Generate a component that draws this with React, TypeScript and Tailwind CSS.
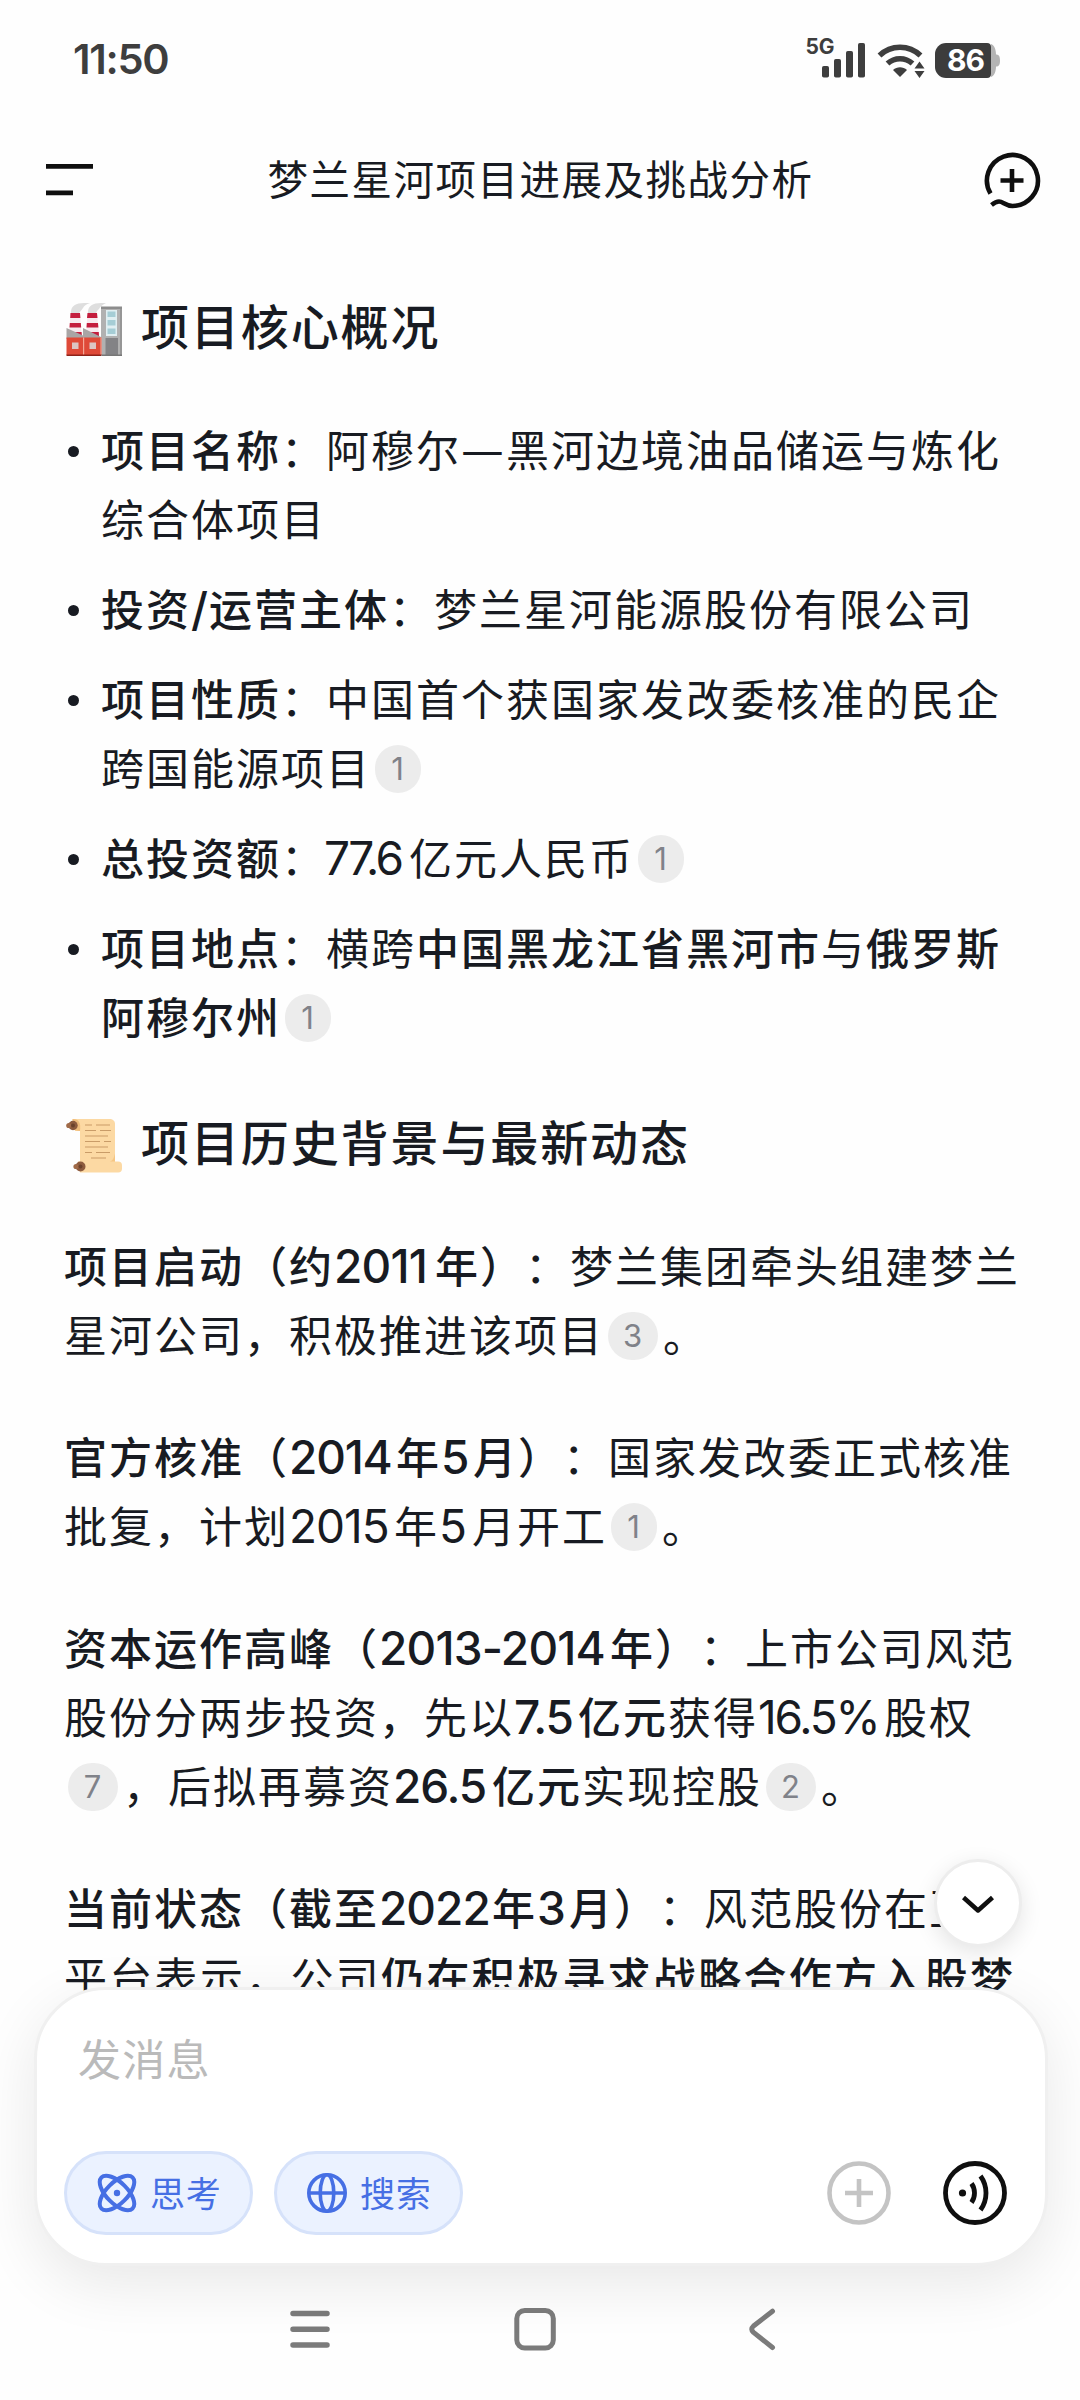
import React from "react";

type Props = { children?: React.ReactNode; className?: string };

function Num({ children, className = "tracking-[-1px]" }: Props) {
  return (
    <span className={`inline-block text-left font-[Inter] text-[46px] leading-none ${className}`}>
      {children}
    </span>
  );
}

function B({ children, className = "" }: Props) {
  return <span className={`font-medium ${className}`}>{children}</span>;
}

function Cite({ n }: { n: number }) {
  return (
    <span
      className={`mr-[5.5px] ml-[3.5px] inline-flex h-12 items-center justify-center rounded-full bg-[#ececec] align-[5px] font-[Inter] text-[31px] leading-none tracking-normal text-[#808289] ${n === 1 ? "w-[46px]" : "w-[50px]"}`}
    >
      {n}
    </span>
  );
}

function Line({ children, className = "" }: Props) {
  return <div className={`h-[69px] leading-[62px] whitespace-nowrap ${className}`}>{children}</div>;
}

function Item({ children }: Props) {
  return (
    <li className="flex">
      <span className="mt-[29px] mr-[22px] ml-1 size-[11px] shrink-0 rounded-full bg-[#181b22]" />
      <div>{children}</div>
    </li>
  );
}

function Heading({ children, icon }: Props & { icon: React.ReactNode }) {
  return (
    <h2 className="flex h-[69px] items-center text-[48px] leading-[62px] font-medium tracking-[1.9px]">
      {icon}
      <span className="ml-[19px] pb-[7px]">{children}</span>
    </h2>
  );
}

function FactoryIcon() {
  return (
    <svg className="mt-1 ml-0.5 h-[54px] w-14" viewBox="0 0 56 54">
      <path d="M5 9C5 3 10 0 18 0h6c-4 1-6 3-7 5-2 3-4 4-4 6H5zM22 9c0-6 5-9 13-9h5c-4 2-6 4-7 6-2 2-3 3-3 5h-8z" fill="#dedede" />
      <path d="M4.500 10h9.500l1.500 22H3zM21.500 10H31l2 22H20z" fill="#f7e9ee" />
      <path d="M4.500 10h9.500l.4 5H4.200zM3.800 20h11l.4 4.500H3.500zM3.200 29h12.400l.4 5H3zM21.500 10H31l.5 5H21zM20.800 20H32l.4 4.500H20.500zM20.200 29h12.600l.2 5H20z" fill="#c41e3e" />
      <path d="M35 5h21v47H35z" fill="#b1b1b1" />
      <path d="M35 3.500h21V6H35z" fill="#8c8c8c" />
      <path d="M54 6h2v46h-2z" fill="#969696" />
      <path d="M40 7h11v26H40z" fill="#e0eff2" />
      <path d="M41.500 8.500h8v5.500h-8zM41.500 17h8v5.500h-8zM41.500 25.500h8V31h-8z" fill="#a5cdd5" />
      <path d="M39.500 35H52v17H39.500z" fill="#838386" />
      <path d="M.5 25L17 32.500V25l18 9v2H.5z" fill="#a9a5a5" />
      <path d="M.5 34.500h35V52H.5z" fill="#df4a38" />
      <path d="M17 34.500h1.200V52H17zM34.500 34.500h1V52h-1z" fill="#f5a797" />
      <path d="M6 39.500h6.500V46H6zM23.500 39.500H30V46h-6.500z" fill="#dcc5c3" />
      <path d="M.5 51.500h35V53H.5z" fill="#8f2219" />
      <path d="M35.500 51.500H56V53H35.500z" fill="#777" />
    </svg>
  );
}

function ScrollIcon() {
  return (
    <svg className="mt-1 ml-0.5 h-[54px] w-14" viewBox="0 0 56 54">
      <path d="M6 0h37c4 0 6 2 6 5v40H14V12H9z" fill="#fcd9a3" />
      <path d="M7 0c6 0 8 4 7 12-6 0-8-3-8-5z" fill="#f0bd7c" />
      <path d="M12 42.500h40a4 4 0 014 4v3a4 4 0 01-4 4H14z" fill="#fcd9a3" />
      <path d="M14 42.500h30c3-1 4-4 5-8v8z" fill="#f5c683" />
      <circle cx="7" cy="6.500" r="4.700" fill="#8d5b3e" />
      <circle cx="2.800" cy="6.500" r="2.600" fill="#a06a48" />
      <circle cx="7" cy="6.500" r="2" fill="#6b412b" />
      <circle cx="14.500" cy="47.500" r="5" fill="#8d5b3e" />
      <circle cx="10" cy="47.500" r="2.600" fill="#a06a48" />
      <circle cx="14.500" cy="47.500" r="2" fill="#6b412b" />
      <g stroke="#c99c68" strokeWidth="1.100" fill="none">
        <path d="M19 6h7M30 6h14M19 11.500h11M34 11.500h11M19 17h23M19 22.500h15M38 22.500h7M19 28h23M19 33.500h7M30 33.500h14M25 39h15" />
      </g>
    </svg>
  );
}

function StatusBar() {
  return (
    <div className="flex h-[120px] items-center pr-[80px] pl-[73px] font-[Inter] text-[#3e3e3e]">
      <span className="text-[41.500px] leading-none font-semibold tracking-[-1.3px]">11:50</span>
      <div className="ml-auto flex items-center">
        <span className="-mr-3 mb-[27px] text-[21px] leading-none font-bold tracking-[-0.4px]">5G</span>
        <svg className="h-9 w-[106px]" viewBox="0 0 106 36" fill="#3e3e3e">
          <rect x="0" y="24" width="7" height="11.500" rx="1.800" />
          <rect x="12" y="17" width="7" height="18.500" rx="1.800" />
          <rect x="24" y="9" width="7" height="26.500" rx="1.800" />
          <rect x="36" y="1" width="7" height="34.500" rx="1.800" />
          <g fill="none" stroke="#3e3e3e" strokeWidth="5.500">
            <path d="M57.500 13.500a29.500 29.500 0 0141 0" />
            <path d="M65.500 21.500a18.500 18.500 0 0125 0" />
          </g>
          <path d="M71 28c4-3.600 10-3.600 14 0l-7 7z" />
          <path d="M97.500 19.500l5 7h-10zM97.500 36l5-7h-10z" />
        </svg>
        <div className="ml-[7px] flex items-center">
          <div className="flex h-[35px] w-[56px] items-center justify-center rounded-l-[11px] rounded-r-[4px] bg-[#3c3c3c] pl-[5px] text-[30px] leading-none font-bold tracking-[-1px] text-white">
            86
          </div>
          <svg className="h-[35px] w-[9px]" viewBox="0 0 9 35" fill="#b4b4b4">
            <path d="M0 1c3 1 5 5 5 10.500 3 0 4 2 4 6s-1 6-4 6C5 29 3 33 0 34z" />
          </svg>
        </div>
      </div>
    </div>
  );
}

function Header() {
  return (
    <div className="flex h-[120px] items-center justify-between pr-[39px] pb-px pl-[46px] text-[#0f0f0f]">
      <svg className="h-9 w-[52px]" viewBox="0 0 52 36" fill="none" stroke="#0f0f0f" strokeWidth="4.800">
        <path d="M0 4.300h47M0 30.800h27" />
      </svg>
      <h1 className="pb-[4px] text-[40.500px] leading-[66px] tracking-[1.5px] text-[#181b22]">梦兰星河项目进展及挑战分析</h1>
      <svg className="h-[60px] w-[58px]" viewBox="0 0 58 60" fill="none" stroke="#0f0f0f" strokeWidth="4.600">
        <path d="M7.500 43.500A25.500 25.500 0 1129.500 56c-7 0-9.500-4.500-13.500-4.500-3 0-5 1.500-7.500 3.500" />
        <path d="M29 19v23M17.500 30.500h23" />
      </svg>
    </div>
  );
}

function Chip({ children, icon }: Props & { icon: React.ReactNode }) {
  return (
    <button className="flex h-[84px] w-[189px] items-center rounded-full border-[3px] border-[#d6e2fa] bg-[#ebf2ff] pl-[30px] text-[35px] leading-none tracking-[0.8px] text-[#466fe4]">
      {icon}
      <span className="ml-[13px] pb-[4px]">{children}</span>
    </button>
  );
}

function Composer() {
  return (
    <div className="relative -mt-3 ml-[34px] h-[279px] w-[1014px] rounded-[72px] border-[3px] border-[#f0f0f0] bg-white px-[27px] shadow-[0_18px_60px_rgba(0,0,0,0.09)]">
      <div className="mt-9 ml-[14px] h-[66px] text-[43px] leading-[63px] tracking-[1.2px] text-[#bababa]">发消息</div>
      <div className="mt-[59px] flex items-center">
        <Chip
          icon={
            <svg className="h-10 w-10" viewBox="0 0 40 40" fill="none" stroke="#466fe4" strokeWidth="4">
              <ellipse cx="20" cy="20" rx="22" ry="10.500" transform="rotate(45 20 20)" />
              <ellipse cx="20" cy="20" rx="22" ry="10.500" transform="rotate(-45 20 20)" />
              <circle cx="20" cy="20" r="3.200" fill="#466fe4" stroke="none" />
            </svg>
          }
        >
          思考
        </Chip>
        <div className="w-[21px]" />
        <Chip
          icon={
            <svg className="h-10 w-10" viewBox="0 0 40 40" fill="none" stroke="#466fe4" strokeWidth="3.600">
              <circle cx="20" cy="20" r="18.200" />
              <ellipse cx="20" cy="20" rx="6.800" ry="18.200" />
              <path d="M2 20h36" />
            </svg>
          }
        >
          搜索
        </Chip>
        <svg className="ml-auto size-16" viewBox="0 0 64 64" fill="none" stroke="#c4c4c4" strokeWidth="4.600">
          <circle cx="32" cy="32" r="29.500" />
          <path d="M32 18v28M18 32h28" />
        </svg>
        <svg className="mr-[11px] ml-[52px] size-16" viewBox="0 0 64 64" fill="none" stroke="#0f0f0f" strokeWidth="4.800">
          <circle cx="32" cy="32" r="29.500" />
          <circle cx="19.500" cy="32" r="3.600" fill="#0f0f0f" stroke="none" />
          <path d="M28.500 22.500a16.500 16.500 0 010 19M37.500 15a29 29 0 010 34" />
        </svg>
      </div>
    </div>
  );
}

function NavBar() {
  return (
    <div className="flex h-[134px] items-start pt-[40px] pl-[288px]">
      <svg className="h-[46px] w-[44px]" viewBox="0 0 44 46" fill="none" stroke="#7b7b7b" strokeWidth="5.500" strokeLinecap="round">
        <path d="M5 7.500h34M5 23.300h34M5 39h34" />
      </svg>
      <svg className="ml-[180px] h-[46px] w-[46px]" viewBox="0 0 46 46" fill="none" stroke="#7b7b7b" strokeWidth="5">
        <rect x="4.800" y="4.500" width="36.500" height="37.500" rx="8" />
      </svg>
      <svg className="ml-[189px] h-[46px] w-[32px]" viewBox="0 0 32 46" fill="none" stroke="#7b7b7b" strokeWidth="5" strokeLinecap="round" strokeLinejoin="round">
        <path d="M25.500 5.200L6.500 20q-3.500 3.200 0 6.400L25.500 41.500" />
      </svg>
    </div>
  );
}

export default function App() {
  return (
    <div className="relative h-[2400px] w-[1080px] overflow-hidden bg-[#fefefe] font-['Noto_Sans_CJK_SC',sans-serif] text-[#181b22]">
      <StatusBar />
      <Header />

      <main className="h-[1759px] pt-[53px] pl-16 text-[43px] tracking-[2px] [text-spacing-trim:space-all]">
        <Heading icon={<FactoryIcon />}>项目核心概况</Heading>

        <ul className="mt-[55px] flex flex-col gap-[21px]">
          <Item>
            <Line><B>项目名称</B>：阿穆尔<span className="inline-block w-[45px] text-[48px] leading-none tracking-normal">—</span>黑河边境油品储运与炼化</Line>
            <Line>综合体项目</Line>
          </Item>
          <Item>
            <Line><B>投资<Num className="w-[18px]">/</Num>运营主体</B>：梦兰星河能源股份有限公司</Line>
          </Item>
          <Item>
            <Line><B>项目性质</B>：中国首个获国家发改委核准的民企</Line>
            <Line>跨国能源项目<Cite n={1} /></Line>
          </Item>
          <Item>
            <Line><B>总投资额</B>：<Num className="-ml-0.5 w-[85px] tracking-[-2.6px]">77.6</Num>亿元人民币<Cite n={1} /></Line>
          </Item>
          <Item>
            <Line><B>项目地点</B>：横跨<B>中国黑龙江省黑河市</B>与<B>俄罗斯</B></Line>
            <Line><B>阿穆尔州</B><Cite n={1} /></Line>
          </Item>
        </ul>

        <div className="mt-14">
          <Heading icon={<ScrollIcon />}>项目历史背景与最新动态</Heading>
        </div>

        <div className="mt-[55px] flex flex-col gap-[53px]">
          <div>
            <Line><B>项目启动（约<Num className="w-[101px] tracking-[-0.8px]">2011</Num>年）</B>：梦兰集团牵头组建梦兰</Line>
            <Line>星河公司，积极推进该项目<Cite n={3} />。</Line>
          </div>
          <div>
            <Line><B>官方核准（<Num className="w-[107px] tracking-[-1.2px]">2014</Num>年<Num className="w-8">5</Num>月）</B>：国家发改委正式核准</Line>
            <Line>批复，计划<Num className="w-[105px] tracking-[-1px]">2015</Num>年<Num className="w-[33px]">5</Num>月开工<Cite n={1} />。</Line>
          </div>
          <div>
            <Line><B>资本运作高峰（<Num className="w-[231px] tracking-[-0.8px]">2013-2014</Num>年）</B>：上市公司风范</Line>
            <Line>股份分两步投资，先以<B><Num className="w-16 tracking-[-1.2px]">7.5</Num>亿元</B>获得<Num className="w-[126px] tracking-[-2.2px]">16.5%</Num>股权</Line>
            <Line><Cite n={7} />，后拟再募资<B><Num className="w-[99px] tracking-[-1.2px]">26.5</Num>亿元</B>实现控股<Cite n={2} />。</Line>
          </div>
          <div>
            <Line><B>当前状态（截至<Num className="w-[113px] tracking-[-1px]">2022</Num>年<Num className="w-8">3</Num>月）</B>：风范股份在互动</Line>
            <Line className="tracking-[2.3px]">平台表示，公司<B>仍在积极寻求战略合作方入股梦</B></Line>
          </div>
        </div>
      </main>

      <Composer />
      <NavBar />

      <button className="absolute top-[1859px] left-[934px] flex size-[88px] items-center justify-center rounded-full border-[3px] border-[#ededed] bg-white shadow-[0_6px_22px_rgba(0,0,0,0.1)]">
        <svg className="mt-1 h-5 w-9" viewBox="0 0 36 20" fill="none" stroke="#0f0f0f" strokeWidth="4.500" strokeLinejoin="round">
          <path d="M3.500 2.500L18 15.500 32.500 2.500" />
        </svg>
      </button>
    </div>
  );
}
